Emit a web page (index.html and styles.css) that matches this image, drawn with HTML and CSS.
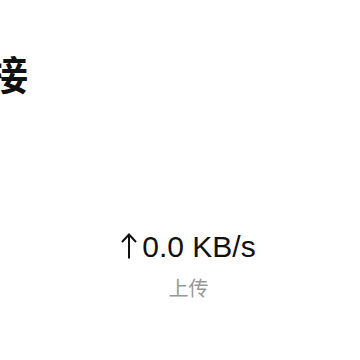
FILE: index.html
```html
<!DOCTYPE html>
<html lang="zh-CN">
  <head>
    <meta charset="UTF-8" />
    <meta name="viewport" content="width=device-width, initial-scale=1.0" />
    <title>连接</title>
    <link rel="stylesheet" href="styles.css">
  </head>
  <body>
    <div class="page">
      <h1 class="title">连接</h1>
      <div class="stats">
        <div class="stat">
          <div class="stat__value">
            <svg class="arrow" width="16" height="26" viewBox="0 0 16 26">
              <path d="M8 1.5V25.5M1 9L8 1.5L15 9" fill="none" stroke="#111" stroke-width="2" />
            </svg>
            <span>0.0 KB/s</span>
          </div>
          <div class="stat__label">上传</div>
        </div>
      </div>
    </div>
  </body>
</html>
```

FILE: styles.css
```css
/* 전체 페이지 */
html,
body {
  margin: 0;
  background: #fff;
  overflow: hidden;
}

.page {
  width: 360px;
  height: 360px;
  font-family: "Liberation Sans", "Noto Sans CJK SC", sans-serif;
  color: #111;
}

/* 잘린 제목 */
.title {
  margin: 0 0 0 -52px;
  padding-top: 49px;
  font-family: "Noto Sans CJK SC", sans-serif;
  font-size: 40px;
  font-weight: 700;
  line-height: 48px;
}

.stats {
  display: flex;
  justify-content: center;
  padding: 133px 0 0 17px;
}

.stat {
  display: flex;
  flex-direction: column;
  align-items: center;
}

.stat__value {
  display: flex;
  align-items: flex-end;
  gap: 5px;
  font-size: 30px;
  line-height: 34px;
}

.arrow {
  margin-bottom: 5px;
}

.stat__label {
  margin-top: 12px;
  font-family: "Noto Sans CJK SC", sans-serif;
  font-size: 20px;
  line-height: 24px;
  color: #999;
}
```
